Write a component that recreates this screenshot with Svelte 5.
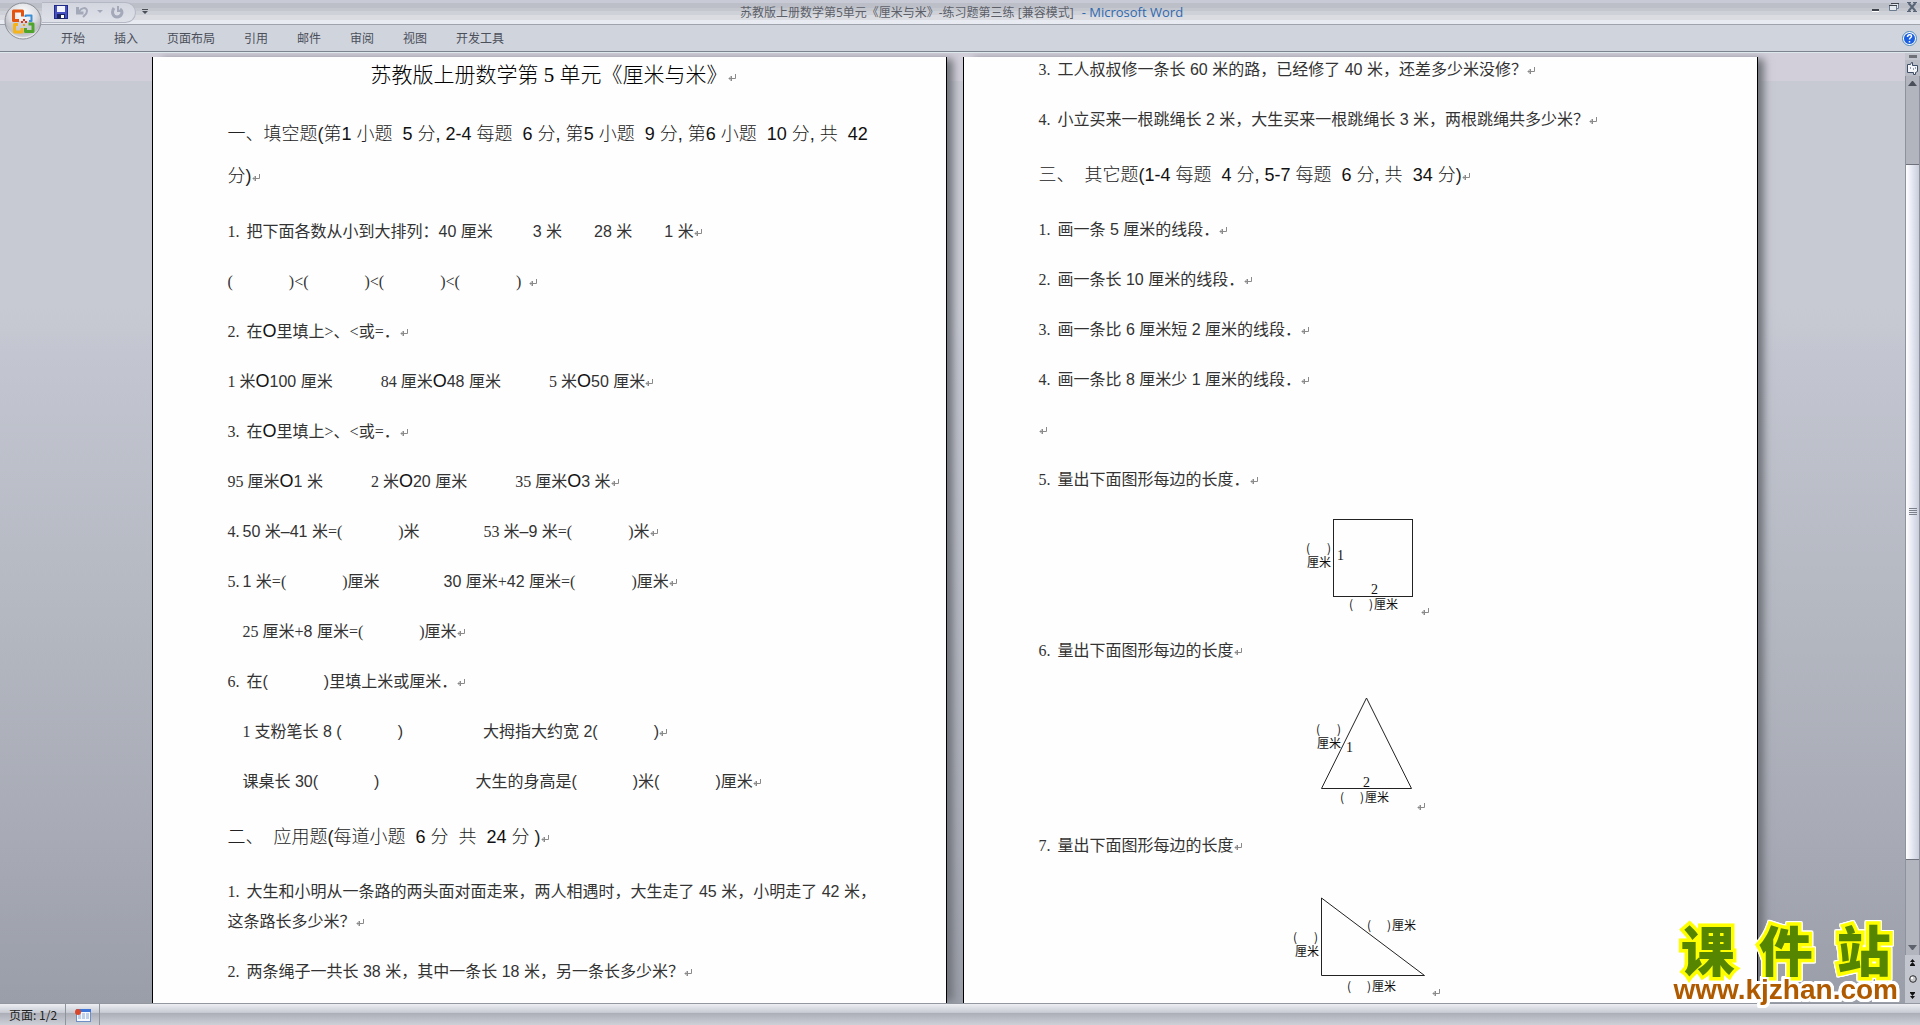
<script>
    const title = "苏教版上册数学第5单元《厘米与米》-练习题第三练 [兼容模式]";
    const tabs = ["开始", "插入", "页面布局", "引用", "邮件", "审阅", "视图", "开发工具"];
</script>

<!-- paragraph mark -->
{#snippet ret()}
    <svg class="ret" viewBox="0 0 8 8" aria-hidden="true"><path d="M7.5 0v4.5H1M3.5 2v5L1 4.5z" /></svg>
{/snippet}

{#snippet blank()}<span class="blank"></span>{/snippet}

{#snippet circle()}<span class="circle">O</span>{/snippet}

<div class="app">
    <header class="titlebar">
        <button class="office" aria-label="Office 按钮">
            <svg viewBox="0 0 38 38">
                <defs>
                    <radialGradient id="orb" cx="50%" cy="30%" r="70%">
                        <stop offset="0" stop-color="#ffffff" />
                        <stop offset="0.55" stop-color="#dcdde2" />
                        <stop offset="0.8" stop-color="#b9bbc2" />
                        <stop offset="1" stop-color="#ffffff" />
                    </radialGradient>
                </defs>
                <circle cx="19" cy="19" r="18" fill="url(#orb)" stroke="#8b8e96" />
                <path d="M4 21a15 14 0 0 0 30 0q-15-4-30 0z" fill="#c3c5cb" opacity="0.6" />
                <path d="M15 18.500H9.500V9H18.500V14.500" fill="none" stroke="#e2540f" stroke-width="3" stroke-linejoin="round" />
                <path d="M21.500 15V13.500H27.500V19H25" fill="none" stroke="#3a8fd6" stroke-width="2" stroke-linejoin="round" />
                <path d="M14 22.500H10.500V30H18V26" fill="none" stroke="#f5b41c" stroke-width="3" stroke-linejoin="round" />
                <path d="M24.500 22H29V29.500H21.500V26" fill="none" stroke="#4fa52c" stroke-width="3" stroke-linejoin="round" />
                <g fill="#d9351a">
                    <rect x="17" y="19" width="2" height="2" /><rect x="21" y="19" width="2" height="2" />
                    <rect x="19" y="17" width="2" height="2" /><rect x="19" y="22" width="2" height="2" fill="#e8a01c" />
                </g>
            </svg>
        </button>
        <div class="side">
            <div class="quick">
                <button class="tool" aria-label="保存">
                    <svg width="14" height="14" viewBox="0 0 14 14">
                        <rect x="0.500" y="0.500" width="13" height="13" fill="#4650c0" stroke="#1f2a86" />
                        <rect x="3" y="1" width="8" height="6" fill="#f2f5ff" />
                        <rect x="3" y="9" width="8" height="5" fill="#1b2260" />
                        <rect x="7" y="10" width="3" height="3" fill="#ffffff" />
                    </svg>
                </button>
                <button class="tool" aria-label="撤消">
                    <svg width="13" height="14" viewBox="0 0 13 14">
                        <path d="M1.500 2v6h6" fill="none" stroke="#a4a9ba" stroke-width="3" />
                        <path d="M3 7C5 2 11 2 11 6c0 3-2 4-4 6" fill="none" stroke="#a4a9ba" stroke-width="2" />
                    </svg>
                </button>
                <svg width="6" height="4" viewBox="0 0 6 4"><path d="M0 0h6L3 3z" fill="#a4a9ba" /></svg>
                <button class="tool" aria-label="重复">
                    <svg width="13" height="14" viewBox="0 0 13 14">
                        <path d="M3 3C0 7 2 12 6 12s7-5 3-8" fill="none" stroke="#a4a9ba" stroke-width="3" />
                        <path d="M7 1v5h5" fill="none" stroke="#a4a9ba" stroke-width="2" />
                    </svg>
                </button>
            </div>
            <button class="tool" aria-label="自定义快速访问工具栏">
                <svg width="6" height="6" viewBox="0 0 6 6"><path d="M0 0h6v1H0zM0 2h6L3 5z" fill="#4b4f58" /></svg>
            </button>
        </div>
        <h1>{title} <span>- Microsoft Word</span></h1>
        <div class="side window">
            <button class="tool" aria-label="最小化">
                <svg width="10" height="10" viewBox="0 0 10 10"><path d="M1 7h7v2H1z" fill="#3f434b" /><path d="M1 9h7v1H1z" fill="#fff" /></svg>
            </button>
            <button class="tool" aria-label="还原">
                <svg width="10" height="10" viewBox="0 0 10 10">
                    <path d="M2.500 1.500h7v5h-2M.500 3.500h7v5h-7z" fill="#e4e8ef" stroke="#6d7b90" />
                    <path d="M2 1h8v1H2zM0 3h8v1H0z" fill="#3f434b" />
                </svg>
            </button>
            <button class="tool" aria-label="关闭">
                <svg width="10" height="10" viewBox="0 0 10 10"><path d="M1.500 1l7 8M8.500 1l-7 8" stroke="#5a6678" stroke-width="2" /><path d="M0 .5h4M6 .5h4M0 9.500h4M6 9.500h4" stroke="#5a6678" /></svg>
            </button>
        </div>
    </header>

    <nav class="ribbon">
        {#each tabs as tab}
            <button class="tab">{tab}</button>
        {/each}
        <button class="tool help" aria-label="帮助">
            <svg width="15" height="15" viewBox="0 0 15 15">
                <circle cx="7.500" cy="7.500" r="7" fill="#fff" stroke="#4a86b8" />
                <circle cx="7.500" cy="7.500" r="5.500" fill="#1c5fe0" />
                <path d="M5.500 6c0-3 4-3 4-.8 0 1.600-2 1.600-2 3.300M7.500 10v1.500" fill="none" stroke="#fff" stroke-width="1.500" />
            </svg>
        </button>
    </nav>

    <div class="workspace">
        <main class="pages">
            <article class="page">
                <h2>苏教版上册数学第 5 单元《厘米与米》{@render ret()}</h2>
                <h3 class="long">一、填空题(第<b>1</b>&nbsp;小题&nbsp; <b>5</b>&nbsp;分,&nbsp;<b>2-4</b>&nbsp;每题&nbsp; <b>6</b>&nbsp;分,&nbsp;第<b>5</b>&nbsp;小题&nbsp; <b>9</b>&nbsp;分,&nbsp;第<b>6</b>&nbsp;小题&nbsp; <b>10</b>&nbsp;分,&nbsp;共&nbsp;&nbsp;<b>42</b><br />分){@render ret()}</h3>
                <p><span class="no">1.</span>把下面各数从小到大排列：40 厘米<i class="gap-m"></i>3 米<i class="gap-s"></i>28 米<i class="gap-s"></i>1 米{@render ret()}</p>
                <p class="serif">({@render blank()})&lt;({@render blank()})&lt;({@render blank()})&lt;({@render blank()})&nbsp; {@render ret()}</p>
                <p><span class="no">2.</span>在{@render circle()}里填上<span class="serif">&gt;</span>、<span class="serif">&lt;</span>或<span class="serif">=</span>．{@render ret()}</p>
                <p><span class="serif">1&nbsp;</span>米{@render circle()}100 厘米<i class="gap-l"></i><span class="serif">84&nbsp;</span>厘米{@render circle()}48 厘米<i class="gap-l"></i><span class="serif">5&nbsp;</span>米{@render circle()}50 厘米{@render ret()}</p>
                <p><span class="no">3.</span>在{@render circle()}里填上<span class="serif">&gt;</span>、<span class="serif">&lt;</span>或<span class="serif">=</span>．{@render ret()}</p>
                <p><span class="serif">95&nbsp;</span>厘米{@render circle()}1 米<i class="gap-l"></i><span class="serif">2&nbsp;</span>米{@render circle()}20 厘米<i class="gap-l"></i><span class="serif">35&nbsp;</span>厘米{@render circle()}3 米{@render ret()}</p>
                <p><span class="no tight">4.</span>50 米–41 米<span class="serif">=({@render blank()})</span>米<i class="gap-xl"></i><span class="serif">53&nbsp;</span>米–9 米<span class="serif">=({@render blank()})</span>米{@render ret()}</p>
                <p><span class="no tight">5.</span>1 米<span class="serif">=({@render blank()})</span>厘米<i class="gap-xl"></i>30 厘米<span class="serif">+</span>42 厘米<span class="serif">=({@render blank()})</span>厘米{@render ret()}</p>
                <p class="indent"><span class="serif">25&nbsp;</span>厘米<span class="serif">+</span>8 厘米<span class="serif">=({@render blank()})</span>厘米{@render ret()}</p>
                <p><span class="no">6.</span>在({@render blank()})里填上米或厘米．{@render ret()}</p>
                <p class="indent"><span class="serif">1&nbsp;</span>支粉笔长 8 ({@render blank()})<i class="gap-2xl"></i>大拇指大约宽 2({@render blank()}){@render ret()}</p>
                <p class="indent">课桌长 30({@render blank()})<i class="gap-3xl"></i>大生的身高是({@render blank()})米({@render blank()})厘米{@render ret()}</p>
                <h3>二、&nbsp; 应用题(每道小题&nbsp; <b>6</b>&nbsp;分&nbsp; 共&nbsp; <b>24</b>&nbsp;分&nbsp;){@render ret()}</h3>
                <p><span class="no">1.</span>大生和小明从一条路的两头面对面走来，两人相遇时，大生走了 45 米，小明走了 42 米，<br />这条路长多少米？{@render ret()}</p>
                <p><span class="no">2.</span>两条绳子一共长 38 米，其中一条长 18 米，另一条长多少米？{@render ret()}</p>
            </article>

            <article class="page">
                <p class="first"><span class="no">3.</span>工人叔叔修一条长 60 米的路，已经修了 40 米，还差多少米没修？{@render ret()}</p>
                <p><span class="no">4.</span>小立买来一根跳绳长 2 米，大生买来一根跳绳长 3 米，两根跳绳共多少米？{@render ret()}</p>
                <h3>三、&nbsp; 其它题(<b>1-4</b>&nbsp;每题&nbsp; <b>4</b>&nbsp;分,&nbsp;<b>5-7</b>&nbsp;每题&nbsp; <b>6</b>&nbsp;分,&nbsp;共&nbsp; <b>34</b>&nbsp;分){@render ret()}</h3>
                <p><span class="no">1.</span>画一条 5 厘米的线段．{@render ret()}</p>
                <p><span class="no">2.</span>画一条长 10 厘米的线段．{@render ret()}</p>
                <p><span class="no">3.</span>画一条比 6 厘米短 2 厘米的线段．{@render ret()}</p>
                <p><span class="no">4.</span>画一条比 8 厘米少 1 厘米的线段．{@render ret()}</p>
                <p>{@render ret()}</p>
                <p><span class="no">5.</span>量出下面图形每边的长度．{@render ret()}</p>
                <div class="figure">
                    <svg width="130" height="101" viewBox="0 0 130 101">
                        <rect x="42.500" y="4.500" width="79" height="77" />
                        <text x="15" y="38">(</text><text x="36" y="38">)</text>
                        <text x="16" y="52">厘米</text>
                        <text x="46" y="45" class="digit">1</text><text x="80" y="79" class="digit">2</text>
                        <text x="58" y="94">(</text><text x="78" y="94">)</text><text x="83" y="94">厘米</text>
                    </svg>
                    {@render ret()}
                </div>
                <p><span class="no">6.</span>量出下面图形每边的长度{@render ret()}</p>
                <div class="figure">
                    <svg width="122" height="125" viewBox="0 0 122 125">
                        <path d="M71.500 12L26.500 102.500h90z" />
                        <text x="21" y="48">(</text><text x="42" y="48">)</text>
                        <text x="22" y="62">厘米</text>
                        <text x="51" y="66" class="digit">1</text><text x="68" y="101" class="digit">2</text>
                        <text x="45" y="116">(</text><text x="65" y="116">)</text><text x="70" y="116">厘米</text>
                    </svg>
                    {@render ret()}
                </div>
                <p><span class="no">7.</span>量出下面图形每边的长度{@render ret()}</p>
                <div class="figure">
                    <svg width="152" height="116" viewBox="0 0 152 116">
                        <path d="M41.500 17v77.500h103z" />
                        <text x="13" y="61">(</text><text x="34" y="61">)</text>
                        <text x="15" y="75">厘米</text>
                        <text x="87" y="49">(</text><text x="107" y="49">)</text><text x="112" y="49">厘米</text>
                        <text x="67" y="110">(</text><text x="87" y="110">)</text><text x="92" y="110">厘米</text>
                    </svg>
                    {@render ret()}
                </div>
            </article>
        </main>

        <aside class="scroll">
            <span class="split"></span>
            <button class="ruler" aria-label="标尺">
                <svg width="13" height="13" viewBox="0 0 13 13">
                    <path d="M1.500 2.500h3l1-2h1v3h5v6l-2 1v2h-2v-2h-6z" fill="#f3f5f9" stroke="#3e4d66" />
                    <path d="M4 6h1M7 7h1M9 6h1" stroke="#3e4d66" />
                </svg>
            </button>
            <div class="track">
                <button class="arrow" aria-label="向上滚动"><svg width="9" height="5" viewBox="0 0 9 5"><path d="M0 5h9L5 0H4z" fill="#4b4f5a" /></svg></button>
                <div class="thumb"><i></i><i></i><i></i><i></i></div>
                <button class="arrow" aria-label="向下滚动"><svg width="9" height="5" viewBox="0 0 9 5"><path d="M0 0h9L5 5H4z" fill="#5d616c" /></svg></button>
            </div>
            <div class="browse">
                <button aria-label="前一页"><svg width="7" height="7" viewBox="0 0 7 7"><path d="M1 3h5L3.500 0zM1 6h5L3.500 3zM1 6h5v1H1z" fill="#111" /></svg></button>
                <button aria-label="选择浏览对象"><svg width="8" height="8" viewBox="0 0 8 8"><circle cx="4" cy="4" r="3.300" fill="#c6c8cc" stroke="#2c2c2c" /><circle cx="3" cy="3" r="1.200" fill="#fff" /></svg></button>
                <button aria-label="下一页"><svg width="7" height="7" viewBox="0 0 7 7"><path d="M1 0h5v1H1zM1 1h5L3.500 4zM1 4h5L3.500 7z" fill="#111" /></svg></button>
            </div>
        </aside>

        <a class="watermark" href="#kjzhan">
            <span class="brand"><span>课</span><span>件</span><span>站</span></span>
            <span class="url">www.kjzhan.com</span>
        </a>
    </div>

    <footer class="status">
        <span class="cell">页面: 1/2</span>
        <button class="cell" aria-label="宏">
            <svg width="16" height="14" viewBox="0 0 16 14">
                <rect x="1.500" y="1.500" width="14" height="12" fill="#f6f9ff" stroke="#6f8fc4" />
                <rect x="2" y="1" width="14" height="3" fill="#3d74d6" />
                <path d="M3 6h3M7 6h3M11 6h3M3 8h3M7 8h3M11 8h3M3 10h3M7 10h3M11 10h3" stroke="#8aa6d2" />
                <circle cx="3" cy="4" r="3" fill="#d9472b" />
            </svg>
        </button>
    </footer>
</div>

<style>
    :global(body) {
        margin: 0;
        overflow: hidden;
    }

    .app {
        display: flex;
        flex-direction: column;
        height: 100vh;
        font-family: "Liberation Sans", "Noto Sans CJK SC", sans-serif;
        color: #333;
    }

    button {
        padding: 0;
        border: none;
        background: none;
        font: inherit;
        color: inherit;
    }

    svg {
        display: block;
    }

    /* Title bar */
    .titlebar {
        position: relative;
        display: flex;
        align-items: center;
        height: 24px;
        border-bottom: 1px solid #9fa3ac;
        background: linear-gradient(#c8cbd5 0 3px, #bcbfc8 3px 8px, #c5c7cf 8px 11px, #cfd1d8 11px 15px, #dadce2 15px 20px, #e9ebf2 20px);
    }

    .office {
        position: absolute;
        left: 4px;
        top: 2px;
        width: 38px;
        height: 38px;
    }

    .side {
        display: flex;
        align-items: center;
        gap: 6px;
        width: 190px;
    }

    .quick {
        display: flex;
        align-items: center;
        gap: 8px;
        box-sizing: border-box;
        width: 94px;
        height: 21px;
        margin-left: 42px;
        padding-left: 12px;
        border: 1px solid #b4b8c4;
        border-left: none;
        border-radius: 0 11px 11px 0;
        background: linear-gradient(#d3d6df, #dfe1e9);
    }

    h1 {
        flex: 1;
        margin: 0;
        text-align: center;
        font: 12px/24px "Open Sans", "Noto Sans CJK SC", sans-serif;
        color: #5c5f68;
    }

    h1 span {
        margin-left: 5px;
        font-size: 13px;
        color: #2f69ae;
    }

    .window {
        justify-content: flex-end;
        align-items: flex-start;
        gap: 8px;
        width: 184px;
        height: 20px;
        padding-right: 3px;
    }

    /* Ribbon */
    .ribbon {
        display: flex;
        align-items: center;
        gap: 29px;
        height: 26px;
        padding: 0 3px 0 61px;
        border-bottom: 1px solid #7c848e;
        background: #d0d4dd;
        font: 12px/24px "Noto Sans CJK SC", sans-serif;
        color: #4b4f5a;
    }

    .help {
        margin-left: auto;
    }

    /* Document area */
    .workspace {
        position: relative;
        display: flex;
        flex: 1;
        min-height: 0;
        border-top: 1px solid #dce8ec;
        background: linear-gradient(#d2cfda 0 28px, #c8cad3 28px 250px, #c3c6d0 300px, #b4b8c1 560px, #a8abb5 780px, #9a9ea8);
    }

    .pages {
        display: flex;
        flex: 1;
        justify-content: center;
        gap: 16px;
        padding: 4px 0 0 4px;
        overflow: hidden;
    }

    .page {
        display: flex;
        flex-direction: column;
        gap: 20px;
        box-sizing: border-box;
        width: 795px;
        padding: 0 75px;
        border: solid #000;
        border-width: 0 1px;
        background: #fefefe;
        box-shadow: 8px 0 8px -2px #70737a;
        overflow: hidden;
        white-space: nowrap;
    }

    h2,
    h3,
    p {
        margin: 0;
        font-weight: 400;
    }

    h2 {
        padding-left: 8px;
        font: 21px/36px "Liberation Serif", "Noto Sans CJK SC", serif;
        font-weight: 300;
        text-align: center;
        color: #000;
    }

    h3 {
        font-size: 18px;
        font-weight: 300;
        line-height: 40px;
        color: #222;
    }

    h3 b {
        font-weight: 400;
        color: #111;
    }

    .long {
        line-height: 42px;
    }

    p {
        font-size: 16px;
        line-height: 30px;
    }

    .first {
        margin-top: -2px;
    }

    .indent {
        padding-left: 15px;
    }

    .serif,
    .no {
        font-family: "Liberation Serif", "Noto Sans CJK SC", serif;
    }

    .no {
        display: inline-block;
        width: 19px;
    }

    .tight {
        width: 15px;
    }

    .blank {
        display: inline-block;
        width: 56px;
    }

    .circle {
        font-size: 18px;
        line-height: 20px;
        color: #111;
    }

    .gap-s,
    .gap-m,
    .gap-l,
    .gap-xl,
    .gap-2xl,
    .gap-3xl {
        display: inline-block;
        width: 32px;
    }

    .gap-m {
        width: 40px;
    }

    .gap-l {
        width: 48px;
    }

    .gap-xl {
        width: 64px;
    }

    .gap-2xl {
        width: 80px;
    }

    .gap-3xl {
        width: 96px;
    }

    .ret {
        display: inline-block;
        width: 8px;
        height: 8px;
        fill: none;
        stroke: #8a8a8a;
    }

    .figure {
        display: flex;
        justify-content: center;
        align-items: flex-end;
        flex-shrink: 0;
        fill: none;
        stroke: #222;
    }

    .figure text {
        fill: #111;
        stroke: none;
        font: 12px "Noto Sans CJK SC", sans-serif;
    }

    .figure .digit {
        font: 14px "Liberation Serif", serif;
    }

    /* Scroll bar */
    .scroll {
        display: flex;
        flex-direction: column;
        align-items: center;
        width: 15px;
        background: #c3c6cf;
    }

    .scroll button {
        display: flex;
        align-items: center;
        justify-content: center;
    }

    .split {
        width: 8px;
        height: 3px;
        margin: 2px 0;
        background: #6f7178;
    }

    .ruler {
        width: 15px;
        height: 16px;
        background: #b9bcc4;
    }

    .track {
        display: flex;
        flex: 1;
        flex-direction: column;
        width: 13px;
        border: solid #8e929c;
        border-width: 0 1px;
        background: #b2b5be;
    }

    .arrow {
        height: 15px;
    }

    .thumb {
        display: flex;
        flex-direction: column;
        align-items: center;
        justify-content: center;
        gap: 1px;
        height: 79%;
        margin: auto 0 80px;
        border: solid #6f727c;
        border-width: 1px 0;
        background: linear-gradient(90deg, #fff, #e6e9f2 45%, #c9cddc);
    }

    .thumb i {
        width: 8px;
        height: 1px;
        background: #7c808a;
    }

    .browse {
        display: flex;
        flex-direction: column;
        align-items: center;
        justify-content: space-around;
        height: 48px;
    }

    /* Site mark over the corner of the document */
    .watermark {
        position: absolute;
        right: 22px;
        bottom: 0;
        display: flex;
        flex-direction: column;
        align-items: center;
        text-decoration: none;
        filter: drop-shadow(1px 0 0 #fff) drop-shadow(-1px 0 0 #fff) drop-shadow(0 1px 0 #fff) drop-shadow(0 -1px 0 #fff);
    }

    .brand {
        display: flex;
        gap: 24px;
        font: 900 54px/56px "Noto Sans CJK SC", sans-serif;
        color: #568500;
        -webkit-text-stroke: 7px #ff0;
        paint-order: stroke fill;
    }

    .url {
        font: bold 28px/26px "Liberation Sans", sans-serif;
        color: #b05a00;
        -webkit-text-stroke: 4px #fff;
        paint-order: stroke fill;
    }

    /* Status bar */
    .status {
        display: flex;
        height: 21px;
        border-top: 1px solid #93979f;
        background: linear-gradient(#eceef3, #c9ccd4 40%, #acafb8 45%, #cdd0d7);
        font: 12px/21px "Noto Sans CJK SC", sans-serif;
        color: #222;
    }

    .cell {
        padding: 0 8px 0 9px;
        border-right: 1px solid #8f939c;
    }
</style>
